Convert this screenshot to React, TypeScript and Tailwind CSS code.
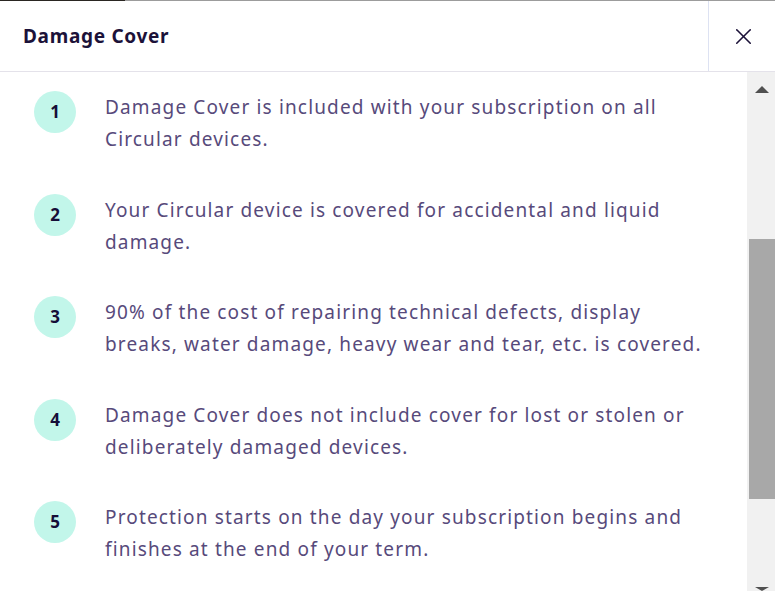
import { X } from "lucide-react";

const ITEMS = [
  "Damage Cover is included with your subscription on all Circular devices.",
  "Your Circular device is covered for accidental and liquid damage.",
  "90% of the cost of repairing technical defects, display breaks, water damage, heavy wear and tear, etc. is covered.",
  "Damage Cover does not include cover for lost or stolen or deliberately damaged devices.",
  "Protection starts on the day your subscription begins and finishes at the end of your term.",
];

function Scrollbar() {
  return (
    <div className="w-[28px] shrink-0 bg-[#f1f1f1] flex flex-col items-end">
      <div className="w-full h-[34px] flex items-center justify-center pl-[1px]">
        <span className="block w-0 h-0 border-l-[7px] border-r-[7px] border-b-[7px] border-l-transparent border-r-transparent border-b-[#505050]" />
      </div>
      <div className="h-[133px]" />
      <div className="w-[26px] h-[260px] bg-[#a8a8a8]" />
      <div className="flex-1" />
      <div className="w-full h-[4px] flex items-end justify-center pl-[1px]">
        <span className="block w-0 h-0 border-l-[7px] border-r-[7px] border-t-[4px] border-l-transparent border-r-transparent border-t-[#505050]" />
      </div>
    </div>
  );
}

export default function App() {
  return (
    <div className="w-[775px] h-[591px] overflow-hidden bg-white flex flex-col font-['Noto_Sans',sans-serif]">
      {/* strip of the page behind the modal */}
      <div className="flex h-[1px] shrink-0">
        <div className="w-[125px] bg-[#2a2622]" />
        <div className="flex-1 bg-[#9c9c9c]" />
      </div>

      <div className="flex h-[71px] shrink-0 border-b border-[#e4e2ea]">
        <div className="flex-1 flex items-center pl-[23px]">
          <h2 className="text-[19px] font-bold text-[#1c1239] tracking-[0.7px]">Damage Cover</h2>
        </div>
        <button className="w-[67px] border-l border-[#dde2f2] flex items-center justify-center pl-[3px] text-[#1c1239]">
          <X size={27} strokeWidth={1.4} />
        </button>
      </div>

      <div className="flex flex-1 min-h-0">
        <div className="flex-1 overflow-hidden pt-[19px] pl-[34px] pr-[34px]">
          <ol className="flex flex-col gap-[38.5px]">
            {ITEMS.map((text, i) => (
              <li key={i} className="flex gap-[29px]">
                <span className="w-[42px] h-[42px] shrink-0 rounded-full bg-[#c2f6ea] grid place-items-center text-[17px] font-bold text-[#150d38]">
                  {i + 1}
                </span>
                <p className="text-[19px] leading-[32px] text-[#574a7b] tracking-[1.15px]">{text}</p>
              </li>
            ))}
          </ol>
        </div>
        <Scrollbar />
      </div>
    </div>
  );
}
